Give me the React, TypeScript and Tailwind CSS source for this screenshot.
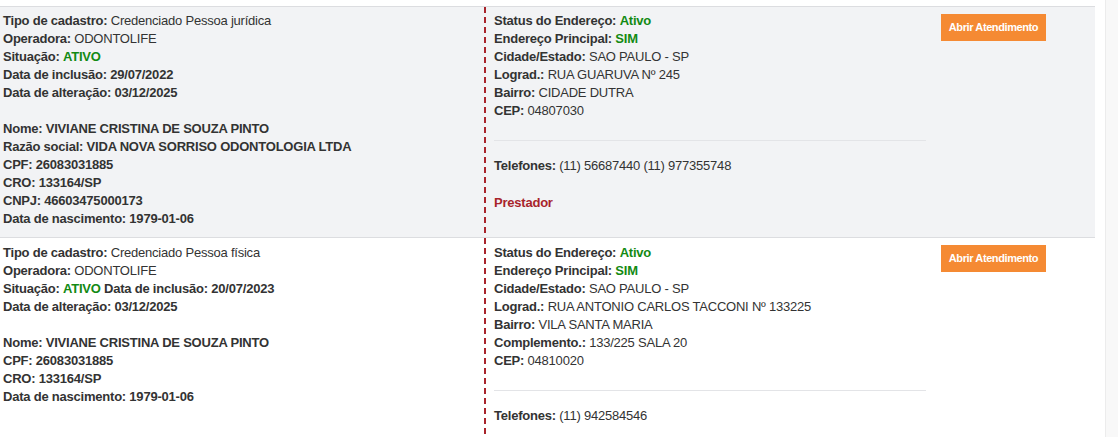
import React from "react";

const G = ({ children }: { children: React.ReactNode }) => (
  <span className="font-bold text-[#138a13]">{children}</span>
);

const B = ({ children }: { children: React.ReactNode }) => (
  <span className="font-bold">{children}</span>
);

function Line({ children }: { children?: React.ReactNode }) {
  return <div className="h-[18px] leading-[18px] whitespace-nowrap">{children}</div>;
}

function Button() {
  return (
    <button className="h-[27px] w-[105px] bg-[#f58a33] text-white text-[11px] font-bold tracking-[-0.4px] leading-[27px] text-center">
      Abrir Atendimento
    </button>
  );
}

function Row({
  left,
  right,
  bg,
  pt,
  pb,
}: {
  left: React.ReactNode;
  right: React.ReactNode;
  bg: string;
  pt: string;
  pb: string;
}) {
  return (
    <div className={`flex border-t border-[#dcdde0] ${bg}`}>
      <div className={`w-[484px] shrink-0 pl-[3px] ${pt} ${pb}`}>{left}</div>
      <div className="w-[2px] shrink-0 bg-[repeating-linear-gradient(to_bottom,#a8242b_0px,#a8242b_6px,transparent_6px,transparent_10px)]" />
      <div className={`w-[445px] shrink-0 pl-[8px] pr-[5px] ${pt}`}>{right}</div>
      <div className="flex-1 pl-[10px] pt-[7px]">
        <Button />
      </div>
    </div>
  );
}

export default function App() {
  return (
    <div
      className="flex h-[437px] w-[1118px] bg-white text-[13px] tracking-[-0.22px] text-[#333333] overflow-hidden"
      style={{ fontFamily: '"Liberation Sans", Arial, sans-serif' }}
    >
      <div className="w-[1095px] shrink-0 pt-[6px]">
        <Row
          bg="bg-[#f2f3f5]"
          pt="pt-[5px]"
          pb="pb-[9px]"
          left={
            <>
              <Line>
                <B>Tipo de cadastro:</B> Credenciado Pessoa jurídica
              </Line>
              <Line>
                <B>Operadora:</B> ODONTOLIFE
              </Line>
              <Line>
                <B>Situação:</B> <G>ATIVO</G>
              </Line>
              <Line>
                <B>Data de inclusão: 29/07/2022</B>
              </Line>
              <Line>
                <B>Data de alteração: 03/12/2025</B>
              </Line>
              <Line />
              <Line>
                <B>Nome: VIVIANE CRISTINA DE SOUZA PINTO</B>
              </Line>
              <Line>
                <B>Razão social: VIDA NOVA SORRISO ODONTOLOGIA LTDA</B>
              </Line>
              <Line>
                <B>CPF: 26083031885</B>
              </Line>
              <Line>
                <B>CRO: 133164/SP</B>
              </Line>
              <Line>
                <B>CNPJ: 46603475000173</B>
              </Line>
              <Line>
                <B>Data de nascimento: 1979-01-06</B>
              </Line>
            </>
          }
          right={
            <>
              <Line>
                <B>Status do Endereço:</B> <G>Ativo</G>
              </Line>
              <Line>
                <B>Endereço Principal:</B> <G>SIM</G>
              </Line>
              <Line>
                <B>Cidade/Estado:</B> SAO PAULO - SP
              </Line>
              <Line>
                <B>Lograd.:</B> RUA GUARUVA Nº 245
              </Line>
              <Line>
                <B>Bairro:</B> CIDADE DUTRA
              </Line>
              <Line>
                <B>CEP:</B> 04807030
              </Line>
              <div className="mt-[20px] mb-[16px] border-t border-[#e3e4e7]" />
              <Line>
                <B>Telefones:</B> (11) 56687440 (11) 977355748
              </Line>
              <div className="mt-[19px] h-[18px] leading-[18px] font-bold text-[#a8242b]">
                Prestador
              </div>
            </>
          }
        />
        <Row
          bg="bg-white"
          pt="pt-[6px]"
          pb="pb-[40px]"
          left={
            <>
              <Line>
                <B>Tipo de cadastro:</B> Credenciado Pessoa física
              </Line>
              <Line>
                <B>Operadora:</B> ODONTOLIFE
              </Line>
              <Line>
                <B>Situação:</B> <G>ATIVO</G> <B>Data de inclusão: 20/07/2023</B>
              </Line>
              <Line>
                <B>Data de alteração: 03/12/2025</B>
              </Line>
              <Line />
              <Line>
                <B>Nome: VIVIANE CRISTINA DE SOUZA PINTO</B>
              </Line>
              <Line>
                <B>CPF: 26083031885</B>
              </Line>
              <Line>
                <B>CRO: 133164/SP</B>
              </Line>
              <Line>
                <B>Data de nascimento: 1979-01-06</B>
              </Line>
            </>
          }
          right={
            <>
              <Line>
                <B>Status do Endereço:</B> <G>Ativo</G>
              </Line>
              <Line>
                <B>Endereço Principal:</B> <G>SIM</G>
              </Line>
              <Line>
                <B>Cidade/Estado:</B> SAO PAULO - SP
              </Line>
              <Line>
                <B>Lograd.:</B> RUA ANTONIO CARLOS TACCONI Nº 133225
              </Line>
              <Line>
                <B>Bairro:</B> VILA SANTA MARIA
              </Line>
              <Line>
                <B>Complemento.:</B> 133/225 SALA 20
              </Line>
              <Line>
                <B>CEP:</B> 04810020
              </Line>
              <div className="mt-[20px] mb-[16px] border-t border-[#e3e4e7]" />
              <Line>
                <B>Telefones:</B> (11) 942584546
              </Line>
            </>
          }
        />
      </div>
      <div className="w-[10px] shrink-0 bg-white" />
      <div className="flex-1 border-l border-[#ececec] bg-[#f8f8f8]" />
    </div>
  );
}
